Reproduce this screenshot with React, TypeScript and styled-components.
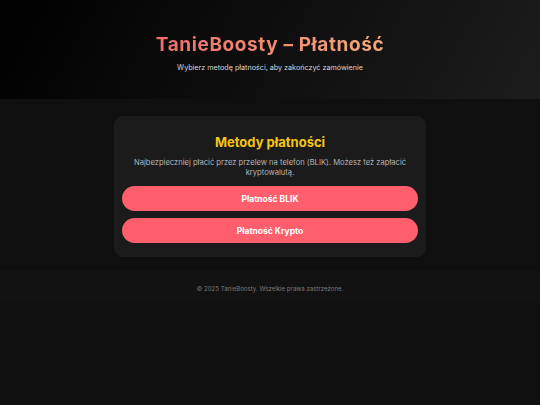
import React from "react";
import styled, { createGlobalStyle } from "styled-components";

const Global = createGlobalStyle`
  html, body { margin: 0; padding: 0; background: #0f0f0f; }
  body { font-family: Inter, "Noto Sans", "DejaVu Sans", sans-serif; color: #eee; }
  * { box-sizing: border-box; }
`;

const Page = styled.div`
  min-height: 405px;
  background: #0f0f0f;
  display: flex;
  flex-direction: column;
`;

const Header = styled.header`
  height: 99px;
  background: linear-gradient(120deg, #000000 0%, #0d0d0d 45%, #1c1c1c 100%);
  display: flex;
  flex-direction: column;
  align-items: center;
  padding-top: 33px;
`;

const Title = styled.h1`
  margin: 0;
  font-size: 19px;
  font-weight: 700;
  line-height: 24px;
  letter-spacing: 0.6px;
  background: linear-gradient(90deg, #ef6c6c 0%, #f5ab7a 100%);
  -webkit-background-clip: text;
  background-clip: text;
  color: transparent;
`;

const Subtitle = styled.p`
  margin: 6px 0 0;
  font-size: 7.2px;
  line-height: 10px;
  color: #d8d8d8;
`;

const Main = styled.main`
  display: flex;
  justify-content: center;
  padding: 17px 0 13px;
`;

const Card = styled.section`
  width: 312px;
  background: #1b1b1b;
  border-radius: 9px;
  padding: 17px 8px 14px;
  display: flex;
  flex-direction: column;
  align-items: stretch;
  text-align: center;
`;

const CardTitle = styled.h2`
  margin: 0;
  font-size: 13px;
  line-height: 18px;
  font-weight: 700;
  color: #f5c518;
`;

const CardText = styled.p`
  margin: 7px 6px 8px;
  font-size: 7.6px;
  line-height: 10px;
  color: #b5b5b5;
`;

const PayButton = styled.button`
  height: 25px;
  border: none;
  border-radius: 13px;
  background: #ff5f6d;
  color: #fff;
  font-family: inherit;
  font-size: 8.5px;
  font-weight: 700;
  cursor: pointer;
  & + & { margin-top: 7px; }
`;

const Footer = styled.footer`
  height: 33px;
  background: #121212;
  padding-top: 14px;
  text-align: center;
  font-size: 6.1px;
  line-height: 10px;
  color: #7a7a7a;
`;

export default function App() {
  return (
    <>
      <Global />
      <Page>
        <Header>
          <Title>TanieBoosty – Płatność</Title>
          <Subtitle>Wybierz metodę płatności, aby zakończyć zamówienie</Subtitle>
        </Header>
        <Main>
          <Card>
            <CardTitle>Metody płatności</CardTitle>
            <CardText>
              Najbezpieczniej płacić przez przelew na telefon (BLIK). Możesz też zapłacić kryptowalutą.
            </CardText>
            <PayButton>Płatność BLIK</PayButton>
            <PayButton>Płatność Krypto</PayButton>
          </Card>
        </Main>
        <Footer>© 2025 TanieBoosty. Wszelkie prawa zastrzeżone.</Footer>
      </Page>
    </>
  );
}
